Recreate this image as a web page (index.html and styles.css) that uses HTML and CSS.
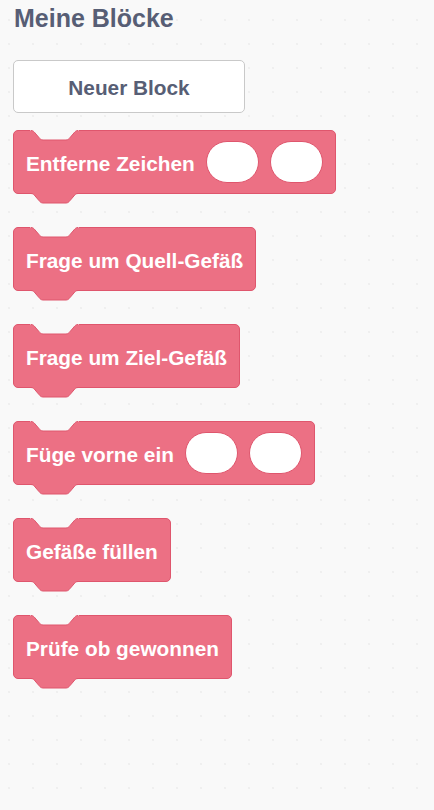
FILE: index.html
```html
<!DOCTYPE html>
<html lang="de">
<head>
<meta charset="utf-8">
<title>Meine Blöcke</title>
<link rel="stylesheet" href="styles.css">
</head>
<body>
<div class="palette">
  <h2 class="title">Meine Blöcke</h2>
  <button class="new-block" type="button">Neuer Block</button>
  <div class="blocks">
    <div class="block">
      <span class="label">Entferne Zeichen</span>
      <span class="slot"></span>
      <span class="slot"></span>
      <svg class="notch" width="48" height="12" viewBox="0 0 48 12"><path class="notch-fill" d="M-1,-1.5 L-1,0.5 L0,0.5 C2,0.5 3,1.7 4,2.9 L8,7.6 C9,8.8 10,10 12,10 L35,10 C37,10 38,8.8 39,7.6 L43,2.9 C44,1.7 45,0.5 47,0.5 L48,0.5 L48,-1.5 Z"/><path class="notch-line" d="M0,0.5 C2,0.5 3,1.7 4,2.9 L8,7.6 C9,8.8 10,10 12,10 L35,10 C37,10 38,8.8 39,7.6 L43,2.9 C44,1.7 45,0.5 47,0.5"/></svg>
      <svg class="tab" width="48" height="12" viewBox="0 0 48 12"><path class="tab-fill" d="M0,-1 L0,0.5 C2,0.5 3,1.7 4,2.9 L8,7.6 C9,8.8 10,10 12,10 L35,10 C37,10 38,8.8 39,7.6 L43,2.9 C44,1.7 45,0.5 47,0.5 L47,-1 Z"/><path class="tab-line" d="M0,0.5 C2,0.5 3,1.7 4,2.9 L8,7.6 C9,8.8 10,10 12,10 L35,10 C37,10 38,8.8 39,7.6 L43,2.9 C44,1.7 45,0.5 47,0.5"/></svg>
    </div>
    <div class="block">
      <span class="label">Frage um Quell-Gefäß</span>
      <svg class="notch" width="48" height="12" viewBox="0 0 48 12"><path class="notch-fill" d="M-1,-1.5 L-1,0.5 L0,0.5 C2,0.5 3,1.7 4,2.9 L8,7.6 C9,8.8 10,10 12,10 L35,10 C37,10 38,8.8 39,7.6 L43,2.9 C44,1.7 45,0.5 47,0.5 L48,0.5 L48,-1.5 Z"/><path class="notch-line" d="M0,0.5 C2,0.5 3,1.7 4,2.9 L8,7.6 C9,8.8 10,10 12,10 L35,10 C37,10 38,8.8 39,7.6 L43,2.9 C44,1.7 45,0.5 47,0.5"/></svg>
      <svg class="tab" width="48" height="12" viewBox="0 0 48 12"><path class="tab-fill" d="M0,-1 L0,0.5 C2,0.5 3,1.7 4,2.9 L8,7.6 C9,8.8 10,10 12,10 L35,10 C37,10 38,8.8 39,7.6 L43,2.9 C44,1.7 45,0.5 47,0.5 L47,-1 Z"/><path class="tab-line" d="M0,0.5 C2,0.5 3,1.7 4,2.9 L8,7.6 C9,8.8 10,10 12,10 L35,10 C37,10 38,8.8 39,7.6 L43,2.9 C44,1.7 45,0.5 47,0.5"/></svg>
    </div>
    <div class="block">
      <span class="label">Frage um Ziel-Gefäß</span>
      <svg class="notch" width="48" height="12" viewBox="0 0 48 12"><path class="notch-fill" d="M-1,-1.5 L-1,0.5 L0,0.5 C2,0.5 3,1.7 4,2.9 L8,7.6 C9,8.8 10,10 12,10 L35,10 C37,10 38,8.8 39,7.6 L43,2.9 C44,1.7 45,0.5 47,0.5 L48,0.5 L48,-1.5 Z"/><path class="notch-line" d="M0,0.5 C2,0.5 3,1.7 4,2.9 L8,7.6 C9,8.8 10,10 12,10 L35,10 C37,10 38,8.8 39,7.6 L43,2.9 C44,1.7 45,0.5 47,0.5"/></svg>
      <svg class="tab" width="48" height="12" viewBox="0 0 48 12"><path class="tab-fill" d="M0,-1 L0,0.5 C2,0.5 3,1.7 4,2.9 L8,7.6 C9,8.8 10,10 12,10 L35,10 C37,10 38,8.8 39,7.6 L43,2.9 C44,1.7 45,0.5 47,0.5 L47,-1 Z"/><path class="tab-line" d="M0,0.5 C2,0.5 3,1.7 4,2.9 L8,7.6 C9,8.8 10,10 12,10 L35,10 C37,10 38,8.8 39,7.6 L43,2.9 C44,1.7 45,0.5 47,0.5"/></svg>
    </div>
    <div class="block">
      <span class="label">Füge vorne ein</span>
      <span class="slot"></span>
      <span class="slot"></span>
      <svg class="notch" width="48" height="12" viewBox="0 0 48 12"><path class="notch-fill" d="M-1,-1.5 L-1,0.5 L0,0.5 C2,0.5 3,1.7 4,2.9 L8,7.6 C9,8.8 10,10 12,10 L35,10 C37,10 38,8.8 39,7.6 L43,2.9 C44,1.7 45,0.5 47,0.5 L48,0.5 L48,-1.5 Z"/><path class="notch-line" d="M0,0.5 C2,0.5 3,1.7 4,2.9 L8,7.6 C9,8.8 10,10 12,10 L35,10 C37,10 38,8.8 39,7.6 L43,2.9 C44,1.7 45,0.5 47,0.5"/></svg>
      <svg class="tab" width="48" height="12" viewBox="0 0 48 12"><path class="tab-fill" d="M0,-1 L0,0.5 C2,0.5 3,1.7 4,2.9 L8,7.6 C9,8.8 10,10 12,10 L35,10 C37,10 38,8.8 39,7.6 L43,2.9 C44,1.7 45,0.5 47,0.5 L47,-1 Z"/><path class="tab-line" d="M0,0.5 C2,0.5 3,1.7 4,2.9 L8,7.6 C9,8.8 10,10 12,10 L35,10 C37,10 38,8.8 39,7.6 L43,2.9 C44,1.7 45,0.5 47,0.5"/></svg>
    </div>
    <div class="block">
      <span class="label">Gefäße füllen</span>
      <svg class="notch" width="48" height="12" viewBox="0 0 48 12"><path class="notch-fill" d="M-1,-1.5 L-1,0.5 L0,0.5 C2,0.5 3,1.7 4,2.9 L8,7.6 C9,8.8 10,10 12,10 L35,10 C37,10 38,8.8 39,7.6 L43,2.9 C44,1.7 45,0.5 47,0.5 L48,0.5 L48,-1.5 Z"/><path class="notch-line" d="M0,0.5 C2,0.5 3,1.7 4,2.9 L8,7.6 C9,8.8 10,10 12,10 L35,10 C37,10 38,8.8 39,7.6 L43,2.9 C44,1.7 45,0.5 47,0.5"/></svg>
      <svg class="tab" width="48" height="12" viewBox="0 0 48 12"><path class="tab-fill" d="M0,-1 L0,0.5 C2,0.5 3,1.7 4,2.9 L8,7.6 C9,8.8 10,10 12,10 L35,10 C37,10 38,8.8 39,7.6 L43,2.9 C44,1.7 45,0.5 47,0.5 L47,-1 Z"/><path class="tab-line" d="M0,0.5 C2,0.5 3,1.7 4,2.9 L8,7.6 C9,8.8 10,10 12,10 L35,10 C37,10 38,8.8 39,7.6 L43,2.9 C44,1.7 45,0.5 47,0.5"/></svg>
    </div>
    <div class="block">
      <span class="label">Prüfe ob gewonnen</span>
      <svg class="notch" width="48" height="12" viewBox="0 0 48 12"><path class="notch-fill" d="M-1,-1.5 L-1,0.5 L0,0.5 C2,0.5 3,1.7 4,2.9 L8,7.6 C9,8.8 10,10 12,10 L35,10 C37,10 38,8.8 39,7.6 L43,2.9 C44,1.7 45,0.5 47,0.5 L48,0.5 L48,-1.5 Z"/><path class="notch-line" d="M0,0.5 C2,0.5 3,1.7 4,2.9 L8,7.6 C9,8.8 10,10 12,10 L35,10 C37,10 38,8.8 39,7.6 L43,2.9 C44,1.7 45,0.5 47,0.5"/></svg>
      <svg class="tab" width="48" height="12" viewBox="0 0 48 12"><path class="tab-fill" d="M0,-1 L0,0.5 C2,0.5 3,1.7 4,2.9 L8,7.6 C9,8.8 10,10 12,10 L35,10 C37,10 38,8.8 39,7.6 L43,2.9 C44,1.7 45,0.5 47,0.5 L47,-1 Z"/><path class="tab-line" d="M0,0.5 C2,0.5 3,1.7 4,2.9 L8,7.6 C9,8.8 10,10 12,10 L35,10 C37,10 38,8.8 39,7.6 L43,2.9 C44,1.7 45,0.5 47,0.5"/></svg>
    </div>
  </div>
</div>
</body>
</html>
```

FILE: styles.css
```css
html, body {
  margin: 0;
  padding: 0;
}

body {
  width: 434px;
  height: 810px;
  overflow: hidden;
  background-color: #f9f9f9;
  background-image: radial-gradient(circle at 12px 12px, #ececec 0, #ececec 0.6px, transparent 1.1px);
  background-size: 24px 24px;
  background-position: -3px 8px;
  font-family: "Liberation Sans", Arial, Helvetica, sans-serif;
}

.palette {
  padding: 0 0 0 13px;
  display: flex;
  flex-direction: column;
  align-items: flex-start;
}

.title {
  margin: 4px 0 0 1px;
  font-size: 25px;
  line-height: 28px;
  font-weight: bold;
  color: #575e75;
}

.new-block {
  margin-top: 28px;
  width: 232px;
  height: 53px;
  box-sizing: border-box;
  border: 1px solid #c9c9c9;
  border-radius: 5px;
  background: #ffffff;
  color: #575e75;
  font-family: "Liberation Sans", Arial, Helvetica, sans-serif;
  font-size: 20.8px;
  font-weight: bold;
  padding: 2px 0 0 0;
  cursor: pointer;
}

.blocks {
  margin-top: 17px;
  display: flex;
  flex-direction: column;
  align-items: flex-start;
  gap: 33px;
}

.block {
  position: relative;
  display: flex;
  align-items: center;
  gap: 11px;
  box-sizing: border-box;
  height: 64px;
  padding: 3px 12px 0 12px;
  background: #ec7084;
  border: 1px solid #df566d;
  border-radius: 5px;
}

.label {
  color: #ffffff;
  font-size: 20.8px;
  font-weight: bold;
  white-space: nowrap;
}

.slot {
  width: 53px;
  height: 42px;
  box-sizing: border-box;
  margin-top: -3px;
  background: #ffffff;
  border: 1px solid #df566d;
  border-radius: 21px;
}

.notch,
.tab {
  position: absolute;
  left: 17px;
  overflow: visible;
}

.notch {
  top: -1px;
}

.tab {
  top: 100%;
}

.notch-fill {
  fill: #f9f9f9;
}

.tab-fill {
  fill: #ec7084;
}

.notch-line,
.tab-line {
  fill: none;
  stroke: #df566d;
  stroke-width: 1;
}
```
